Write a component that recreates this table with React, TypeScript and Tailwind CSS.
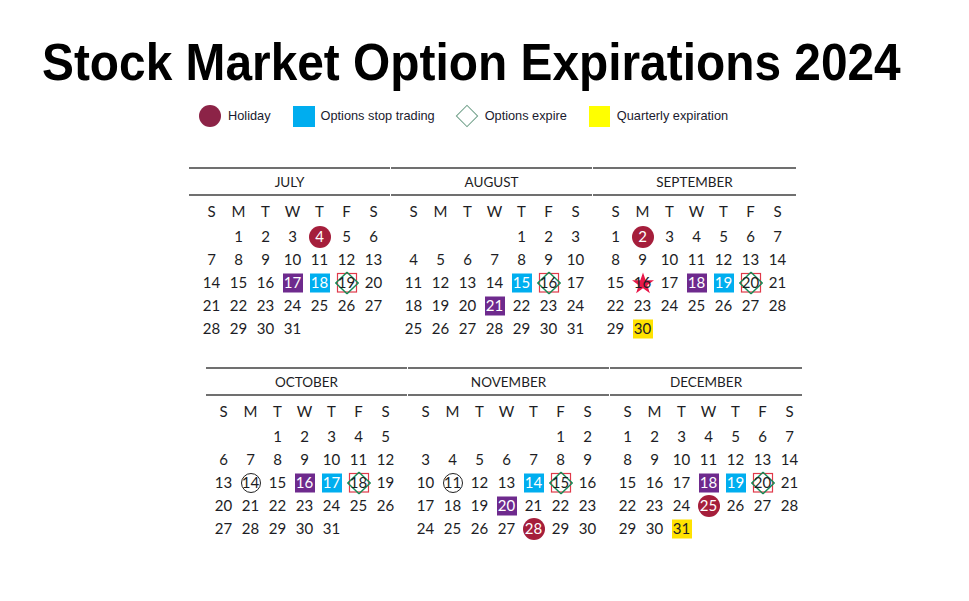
import React from "react";

type Mark = "holiday" | "purple" | "blue" | "expire" | "yellow" | "star" | "ring";

interface Month {
  name: string;
  start: number; // weekday of the 1st, 0 = Sunday
  days: number;
  marks: Record<number, Mark>;
  width: number;
}

const TOP: Month[] = [
  { name: "JULY", start: 1, days: 31, width: 202, marks: { 4: "holiday", 17: "purple", 18: "blue", 19: "expire" } },
  { name: "AUGUST", start: 4, days: 31, width: 202, marks: { 15: "blue", 16: "expire", 21: "purple" } },
  {
    name: "SEPTEMBER", start: 0, days: 30, width: 204,
    marks: { 2: "holiday", 16: "star", 18: "purple", 19: "blue", 20: "expire", 30: "yellow" },
  },
];

const BOTTOM: Month[] = [
  { name: "OCTOBER", start: 2, days: 31, width: 202, marks: { 14: "ring", 16: "purple", 17: "blue", 18: "expire" } },
  {
    name: "NOVEMBER", start: 5, days: 30, width: 202,
    marks: { 11: "ring", 14: "blue", 15: "expire", 20: "purple", 28: "holiday" },
  },
  {
    name: "DECEMBER", start: 0, days: 31, width: 193,
    marks: { 18: "purple", 19: "blue", 20: "expire", 25: "holiday", 31: "yellow" },
  },
];

const WEEK = ["S", "M", "T", "W", "T", "F", "S"];

// ─── Day cell ───────────────────────────────────────────────────────────────────

function Day({ n, mark }: { n: number; mark?: Mark }) {
  let bg = null;
  let text = "text-[#1d1d24]";
  if (mark === "holiday") {
    bg = <span className="absolute left-1/2 top-1/2 -translate-x-1/2 -translate-y-1/2 w-[22px] h-[22px] rounded-full bg-[#a51e3b]" />;
    text = "text-white";
  } else if (mark === "purple") {
    bg = <span className="absolute left-1/2 top-1/2 -translate-x-1/2 -translate-y-1/2 w-[20px] h-[19px] bg-[#6e2a8d]" />;
    text = "text-white";
  } else if (mark === "blue") {
    bg = <span className="absolute left-1/2 top-1/2 -translate-x-1/2 -translate-y-1/2 w-[20px] h-[19px] bg-[#00aeef]" />;
    text = "text-white";
  } else if (mark === "yellow") {
    bg = <span className="absolute left-1/2 top-1/2 -translate-x-1/2 -translate-y-1/2 w-[20px] h-[19px] bg-[#ffe200]" />;
  } else if (mark === "ring") {
    bg = <span className="absolute left-1/2 top-1/2 -translate-x-1/2 -translate-y-1/2 w-[20px] h-[20px] rounded-full border border-[#222]" />;
  } else if (mark === "expire") {
    bg = (
      <svg className="absolute left-1/2 top-1/2 -translate-x-1/2 -translate-y-1/2" width="24" height="23" viewBox="0 0 24 23">
        <rect x="2.5" y="2" width="19" height="18.5" fill="none" stroke="#e03a4a" strokeWidth="1.2" />
        <path d="M12 0.8L23.2 11.5L12 22.2L0.8 11.5Z" fill="none" stroke="#168a56" strokeWidth="1.4" />
      </svg>
    );
  } else if (mark === "star") {
    bg = (
      <svg className="absolute left-1/2 top-1/2 -translate-x-1/2 -translate-y-1/2" width="23" height="22" viewBox="0 0 24 23">
        <path d="M12 0.5l2.8 8.2h8.7l-7 5.1 2.7 8.3L12 17l-7.2 5.1 2.7-8.3-7-5.1h8.7z" fill="#e8184a" />
      </svg>
    );
  }
  return (
    <div className="relative h-[23px] flex items-center justify-center">
      {bg}
      <span className={`relative ${text}`}>{n}</span>
    </div>
  );
}

// ─── Month block ────────────────────────────────────────────────────────────────

function MonthBlock({ m, inset }: { m: Month; inset: string }) {
  const cells: (number | null)[] = [];
  for (let i = 0; i < m.start; i++) cells.push(null);
  for (let d = 1; d <= m.days; d++) cells.push(d);

  return (
    <div style={{ width: m.width }} className="shrink-0">
      <div className="h-[29px] mr-[1px] pt-[1px] border-y-2 border-[#707070] flex items-center justify-center text-[13.5px] text-[#1d1d24]">
        {m.name}
      </div>
      <div className={`grid grid-cols-[repeat(7,27px)] w-[189px] mt-[4px] ${inset}`}>
        {WEEK.map((w, i) => (
          <div key={i} className="h-[23px] mb-[2px] flex items-center justify-center text-[#1d1d24]">
            {w}
          </div>
        ))}
        {cells.map((d, i) => (d === null ? <div key={i} /> : <Day key={i} n={d} mark={m.marks[d]} />))}
      </div>
    </div>
  );
}

// ─── Legend ─────────────────────────────────────────────────────────────────────

function Legend() {
  return (
    <div className="flex items-center h-[22px] mt-[17px] pl-[199px] text-[12.75px] text-[#1a1a2e] font-['Liberation_Sans',Arial,sans-serif]">
      <span className="w-[22px] h-[22px] rounded-full bg-[#8c2347]" />
      <span className="ml-[7px]">Holiday</span>
      <span className="ml-[22px] w-[22px] h-[21px] bg-[#00adef]" />
      <span className="ml-[6px]">Options stop trading</span>
      <span className="ml-[24px] w-[16px] h-[16px] rotate-45 border-[1.5px] border-[#6f9f88]" />
      <span className="ml-[10px]">Options expire</span>
      <span className="ml-[22px] w-[21px] h-[21px] bg-[#ffff00]" />
      <span className="ml-[7px]">Quarterly expiration</span>
    </div>
  );
}

export default function App() {
  return (
    <div className="w-[969px] h-[601px] bg-white overflow-hidden font-['Lato','Carlito',sans-serif] text-[15px]">
      <div className="pt-[36px] pl-[42px] leading-none">
        <h1 className="inline-block origin-left scale-x-[0.92] whitespace-nowrap font-['Liberation_Sans',Arial,sans-serif] font-bold text-[52px] leading-none text-black">
          Stock Market Option Expirations 2024
        </h1>
      </div>

      <Legend />

      <div className="flex mt-[40px] pl-[189px]">
        {TOP.map((m) => (
          <MonthBlock key={m.name} m={m} inset="ml-[9px]" />
        ))}
      </div>

      <div className="flex mt-[27px] pl-[206px]">
        {BOTTOM.map((m) => (
          <MonthBlock key={m.name} m={m} inset="ml-[4px]" />
        ))}
      </div>
    </div>
  );
}
